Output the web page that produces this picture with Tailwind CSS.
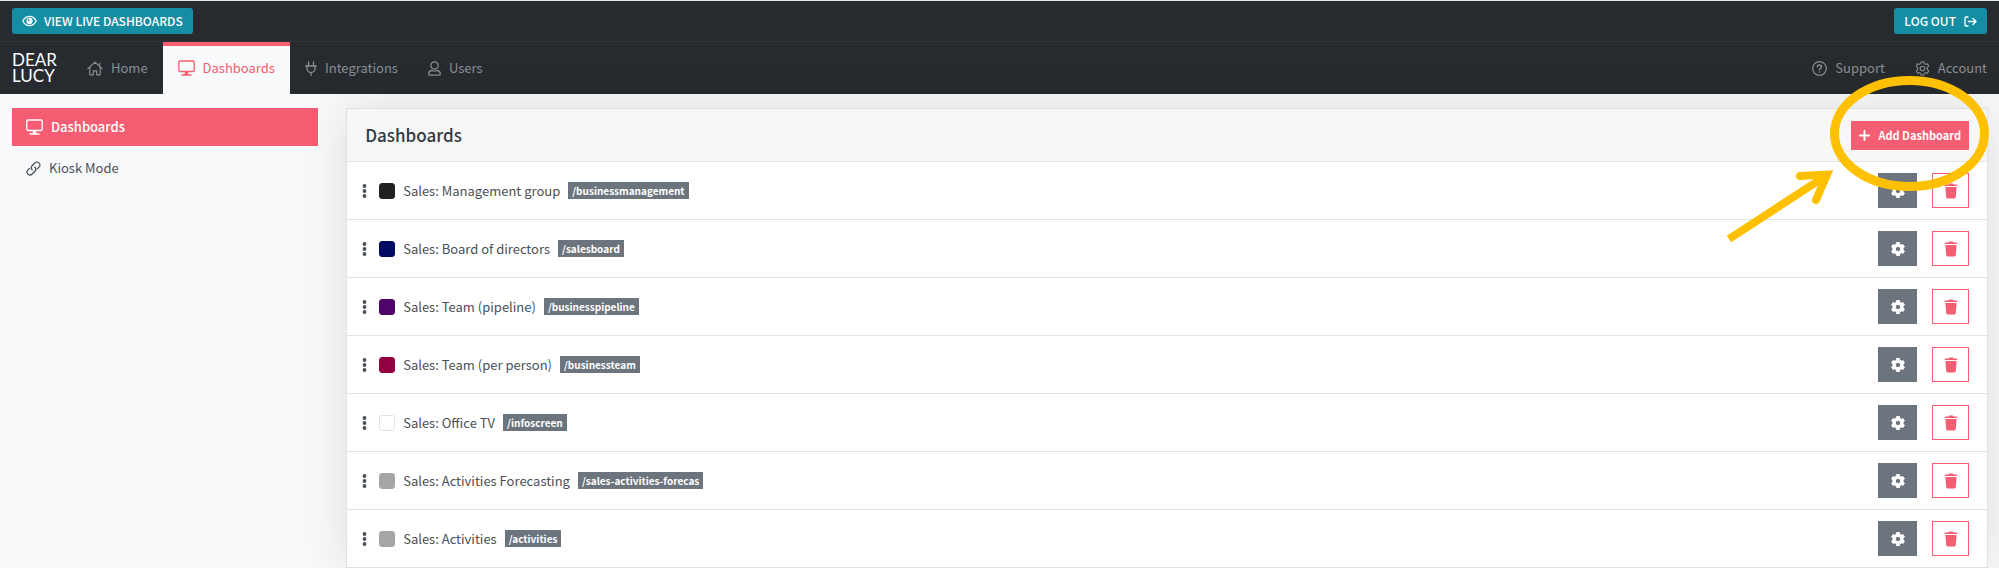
<!DOCTYPE html>
<html lang="en">
<head>
  <meta charset="UTF-8" />
  <meta name="viewport" content="width=device-width, initial-scale=1" />
  <title>Dashboards - Dear Lucy</title>
  <script src="https://cdn.jsdelivr.net/npm/@tailwindcss/browser@4"></script>
</head>
<body class="relative min-h-screen overflow-hidden bg-[#f8f9fb] font-['Noto_Sans_CJK_JP','Noto_Sans',sans-serif] text-[#495057]">

  <!-- Shared icons -->
  <svg class="hidden">
    <symbol id="desktop" viewBox="0 0 17 16" fill="none" stroke="currentColor" stroke-width="1.3">
      <rect x=".8" y="1" width="15.400" height="10.500" rx="1.200" />
      <path d="M4 15H13" stroke-linecap="round" />
      <path d="M7 12h3l.5 3h-4z" fill="currentColor" stroke="none" />
    </symbol>
    <symbol id="cog" viewBox="0 0 16 16">
      <path fill="currentColor" fill-rule="evenodd" stroke="currentColor" stroke-width="1" stroke-linejoin="round" d="M6.600 1.500h2.800l.4 1.900 1.400.8 1.800-.6 1.400 2.300-1.400 1.300v1.600l1.400 1.300-1.400 2.300-1.800-.6-1.400.8-.4 1.900H6.600l-.4-1.900-1.400-.8-1.800.6-1.400-2.300L3 8.800V7.200L1.600 5.900 3 3.600l1.800.6 1.400-.8zM8 5.300a2.700 2.700 0 1 0 0 5.400 2.700 2.700 0 0 0 0-5.400z" />
    </symbol>
    <symbol id="trash" viewBox="0 0 14 16">
      <path fill="currentColor" d="M.8 1.400h3.700L5.100.6h3.800l.6.8h3.700v1.500H.8zM1.400 4.100h11.200l-.8 10a1.400 1.400 0 0 1-1.400 1.300H3.600a1.400 1.400 0 0 1-1.400-1.300z" />
    </symbol>
    <symbol id="dots" viewBox="0 0 5 14">
      <g fill="currentColor"><circle cx="2.500" cy="2" r="1.900" /><circle cx="2.500" cy="7" r="1.900" /><circle cx="2.500" cy="12" r="1.900" /></g>
    </symbol>
  </svg>

  <header class="border-t border-[#e4e5e6] bg-[#272b30]">
    <div class="flex h-[41px] items-center justify-between border-b border-[#303439] px-3 text-[12px] font-medium text-white">
      <a href="#" class="flex h-[26px] items-center gap-[7px] rounded-[3px] bg-[#158ea4] px-[10px]">
        <svg class="h-3 w-[15px]" viewBox="0 0 15 12" fill="none" stroke="currentColor" stroke-width="1.300">
          <path d="M.8 6C2.300 3 4.700 1.300 7.500 1.300S12.700 3 14.200 6C12.700 9 10.300 10.700 7.500 10.700S2.300 9 .8 6z" />
          <circle cx="7.500" cy="6" r="2.500" fill="currentColor" />
          <circle cx="6.500" cy="5" r=".9" fill="#158ea4" stroke="none" />
        </svg>
        VIEW LIVE DASHBOARDS
      </a>
      <button type="button" class="flex h-[26px] items-center gap-2 rounded-[3px] bg-[#158ea4] px-[10px]">
        LOG OUT
        <svg class="h-[11px] w-[13px]" viewBox="0 0 13 11" fill="none" stroke="currentColor" stroke-width="1.300" stroke-linecap="round" stroke-linejoin="round">
          <path d="M4 1H2.200Q1 1 1 2.200V8.800Q1 10 2.200 10H4M4.500 5.500H12M9 2.500L12 5.500 9 8.500" />
        </svg>
      </button>
    </div>

    <nav class="flex h-[52px] items-stretch justify-between px-3 text-[13px] text-[#8b8e92]">
      <div class="flex">
        <a href="#" class="flex w-[60px] items-center font-[Lato] text-[17px] leading-4 text-white">DEAR<br />LUCY</a>
        <a href="#" class="flex items-center gap-2 px-[15px]">
          <svg class="h-[15px] w-4" viewBox="0 0 16 15" fill="none" stroke="currentColor" stroke-width="1.200" stroke-linecap="round" stroke-linejoin="round">
            <path d="M.8 7.600L8 1.200 15.200 7.600M2.800 6.200V13.800H6.300V9.800H9.700V13.800H13.200V6.200M12.700 5V2" />
          </svg>
          Home
        </a>
        <a href="#" class="flex items-center gap-2 border-t-4 border-[#f45d72] bg-[#f8f9fb] px-[15px] pb-1 text-[#f45d72]">
          <svg class="h-4 w-[17px]"><use href="#desktop" /></svg>
          Dashboards
        </a>
        <a href="#" class="flex items-center gap-2 px-[15px]">
          <svg class="h-[15px] w-3" viewBox="0 0 12 15" fill="none" stroke="currentColor" stroke-width="1.300" stroke-linecap="round">
            <path d="M3.500.8V4.500M8.500.8V4.500M.7 5H11.300M2 5V7.500A4 4 0 0 0 10 7.500V5M6 11.500V14.300" />
          </svg>
          Integrations
        </a>
        <a href="#" class="flex items-center gap-2 px-[15px]">
          <svg class="h-[15px] w-[13px]" viewBox="0 0 13 15" fill="none" stroke="currentColor" stroke-width="1.300">
            <circle cx="6.500" cy="4.500" r="3.700" />
            <path d="M3.800 9.500Q.8 9.900.8 12.500V13.200Q.8 14.200 1.800 14.200H11.200Q12.200 14.200 12.200 13.200V12.500Q12.200 9.900 9.200 9.500Q6.500 10.900 3.800 9.500z" />
          </svg>
          Users
        </a>
      </div>
      <div class="flex gap-[30px]">
        <a href="#" class="flex items-center gap-2">
          <svg class="size-[15px]" viewBox="0 0 15 15" fill="none" stroke="currentColor" stroke-width="1.200" stroke-linecap="round">
            <circle cx="7.500" cy="7.500" r="6.800" />
            <path d="M5.500 5.800C5.500 3.400 9.500 3.400 9.500 5.800 9.500 7.300 7.500 7.200 7.500 8.700M7.500 10.900V11" stroke-width="1.500" />
          </svg>
          Support
        </a>
        <a href="#" class="flex items-center gap-2">
          <svg class="size-[15px]" viewBox="0 0 16 16" fill="none" stroke="currentColor" stroke-width="1.200" stroke-linejoin="round">
            <path d="M6.600.8h2.800l.4 2 1.500.8 1.900-.6 1.400 2.400-1.500 1.400v2.400l1.500 1.400-1.400 2.400-1.900-.6-1.500.8-.4 2H6.600l-.4-2-1.500-.8-1.900.6-1.400-2.400 1.500-1.400V6.800L1.400 5.400 2.800 3l1.900.6 1.500-.8z" />
            <circle cx="8" cy="8" r="2.400" />
          </svg>
          Account
        </a>
      </div>
    </nav>
  </header>

  <div class="flex pt-[14px]">
    <aside class="w-1/6 shrink-0 pr-[15px] pl-3 text-[13px]">
      <a href="#" class="flex h-[38px] items-center gap-2 bg-[#f45d72] px-[14px] font-medium text-white">
        <svg class="h-4 w-[17px]"><use href="#desktop" /></svg>
        Dashboards
      </a>
      <a href="#" class="mt-[3px] flex h-[38px] items-center gap-2 px-[14px]">
        <svg class="size-[15px]" viewBox="0 0 16 16" fill="none" stroke="currentColor" stroke-width="1.400" stroke-linecap="round">
          <path d="M6.600 9.400C5.300 8.100 5.300 6.200 6.500 5L9.400 2.100C10.700.8 12.700.8 13.900 2S15.200 5.200 13.900 6.500L12.300 8.100M9.400 6.600C10.700 7.900 10.700 9.800 9.500 11L6.600 13.900C5.300 15.200 3.300 15.200 2.100 14S.8 10.800 2.100 9.500L3.700 7.900" />
        </svg>
        Kiosk Mode
      </a>
    </aside>

    <main class="min-w-0 grow pr-[11px] pl-[13px]">
      <section class="border border-[#dfe0e1] bg-white shadow-[0_0_48px_rgba(0,0,0,0.11)]">
        <div class="flex h-[52px] items-center justify-between bg-[#f7f7f7] px-[18px]">
          <h1 class="text-[17px] font-medium text-[#343a40]">Dashboards</h1>
          <button type="button" class="flex h-[29px] items-center gap-2 bg-[#f45d72] px-2 text-[11px] font-bold text-white">
            <svg class="size-[11px]" viewBox="0 0 11 11" stroke="currentColor" stroke-width="2" stroke-linecap="round"><path d="M5.500 1V10M1 5.500H10" /></svg>
            Add Dashboard
          </button>
        </div>
        <ul id="dashboards" class="text-[13px]"></ul>
      </section>
    </main>
  </div>

  <template id="row">
    <li class="flex h-[58px] items-center border-t border-[#e2e3e4] pr-[18px] pl-[15px]">
      <svg class="h-[14px] w-[5px]"><use href="#dots" /></svg>
      <span class="swatch mr-2 ml-3 size-4 rounded-[3px] border border-[#dee2e6]"></span>
      <span class="name"></span>
      <span class="slug ml-2 flex h-[17px] items-center bg-[#6c757d] px-1 text-[10px] font-bold text-white"></span>
      <button type="button" aria-label="Settings" class="ml-auto flex h-[35px] w-[39px] items-center justify-center bg-[#6c757d] text-white">
        <svg class="size-4"><use href="#cog" /></svg>
      </button>
      <button type="button" aria-label="Delete" class="ml-[15px] flex h-[35px] w-[37px] items-center justify-center border border-[#f45d72] text-[#f45d72]">
        <svg class="h-4 w-[14px]"><use href="#trash" /></svg>
      </button>
    </li>
  </template>

  <!-- Callout around the add button -->
  <svg class="pointer-events-none absolute top-[70px] right-0 h-[180px] w-[280px]" viewBox="1719 70 280 180" fill="none" stroke="#ffc000">
    <ellipse cx="1909.500" cy="133.500" rx="75" ry="53" stroke-width="9" />
    <path d="M1729 239L1824 177" stroke-width="8" />
    <path d="M1800 176L1827 174.500 1816 200" stroke-width="8" stroke-linecap="round" />
  </svg>

  <script>
    const dashboards = [
      { name: 'Sales: Management group', slug: '/businessmanagement', color: '#212121' },
      { name: 'Sales: Board of directors', slug: '/salesboard', color: '#000a62' },
      { name: 'Sales: Team (pipeline)', slug: '/businesspipeline', color: '#50046a' },
      { name: 'Sales: Team (per person)', slug: '/businessteam', color: '#930042' },
      { name: 'Sales: Office TV', slug: '/infoscreen', color: '#ffffff' },
      { name: 'Sales: Activities Forecasting', slug: '/sales-activities-forecas', color: '#a6a6a6' },
      { name: 'Sales: Activities', slug: '/activities', color: '#a6a6a6' },
    ];

    const list = document.getElementById('dashboards');
    const template = document.getElementById('row');
    dashboards.forEach((d) => {
      const row = template.content.cloneNode(true);
      const swatch = row.querySelector('.swatch');
      swatch.style.backgroundColor = d.color;
      if (d.color !== '#ffffff') swatch.style.borderColor = d.color;
      row.querySelector('.name').textContent = d.name;
      row.querySelector('.slug').textContent = d.slug;
      list.appendChild(row);
    });
  </script>
</body>
</html>
